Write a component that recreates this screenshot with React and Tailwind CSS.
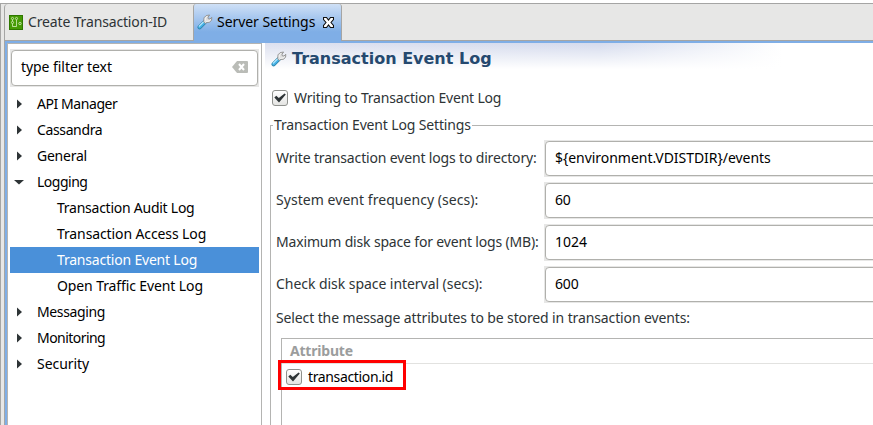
function Wrench() {
  return (
    <svg className="block h-4 w-4 shrink-0" viewBox="0 0 16 16">
      <path d="M2.6 13.2 7.800 8" stroke="#3088ae" strokeWidth="4.200" strokeLinecap="round" />
      <path d="M2.600 13 7.600 8" stroke="#48b5ea" strokeWidth="2.600" strokeLinecap="round" />
      <path d="M2.300 12.200 6.400 8" stroke="#b9e8fb" strokeWidth="1.100" strokeLinecap="round" />
      <path d="M6.800 7.300 7 3.800 9.200 1.600 12.600 1 11 3.200 11.300 4.800 13 5 14.800 3.300 14.600 6 12.700 8.200 9.700 8.500 8.500 9.600 6.500 7.700Z" fill="#dedede" stroke="#8c8c8c" strokeWidth=".9" />
      <path d="M8.200 6.800V4.200L10.200 2.300M9 7.400l3.200-.4 1.700-1.500" fill="none" stroke="#f8f8f8" strokeWidth=".9" />
    </svg>
  );
}

function PolicyIcon() {
  return (
    <svg className="block h-[15px] w-[14px] shrink-0" viewBox="0 0 14 15">
      <path d="M0 0h14v15H0z" fill="#2f7800" />
      <path d="M1 1h12v13H1z" fill="#469b05" />
      <g fill="none" stroke="#d5edbd" strokeWidth=".8">
        <circle cx="3.500" cy="3.500" r="1.100" />
        <circle cx="3.500" cy="7.500" r="1.100" />
        <circle cx="7.500" cy="3.500" r="1.100" />
        <circle cx="11" cy="8.500" r="1.200" />
        <path d="M7.500 4.600v6.900h-4V8.600M3.500 4.600v1.800" />
      </g>
    </svg>
  );
}

function CloseIcon() {
  return (
    <svg className="block h-[11px] w-[11px] shrink-0" viewBox="0 0 11 11">
      <path d="M.5.5h3l2 2.500 2-2.500h3v2L8 5.500l2.500 3v2h-3l-2-2.500-2 2.500h-3v-2L3 5.500.5 2.500Z" fill="#fff" stroke="#111" strokeWidth="1.100" />
    </svg>
  );
}

function ClearIcon() {
  return (
    <svg className="block h-3 w-4 shrink-0" viewBox="0 0 16 12">
      <path d="M0 6 5 0h10q1 0 1 1v10q0 1-1 1H5Z" fill="#babcb7" />
      <path d="m7 3 5 6m0-6L7 9" stroke="#fff" strokeWidth="2" />
    </svg>
  );
}

function CheckBox() {
  return (
    <span className="flex h-4 w-4 shrink-0 items-center justify-center rounded-[3px] border border-[#8f918d] bg-linear-to-b from-white to-[#e4e4e2]">
      <svg className="block h-[10px] w-3" viewBox="0 0 12 10">
        <path d="M.3 4.600 2.300 2.800 4.800 5 10.600.4 11.800 1.500 5 9.400Z" fill="#2e3436" />
      </svg>
    </span>
  );
}

function Arrow({ open }) {
  return (
    <svg className="block h-[10px] w-[10px] shrink-0" viewBox="0 0 10 10">
      <path d={open ? "M0 3h10L5 7.500Z" : "M3 .5v9L8 5Z"} fill="#2e3436" />
    </svg>
  );
}

function Branch({ label, open, track }) {
  return (
    <div className="flex h-[26px] items-center gap-[13px] pl-1">
      <Arrow open={open} />
      <span className={track}>{label}</span>
    </div>
  );
}

function Leaf({ label, selected, track }) {
  return (
    <div className={selected ? "flex h-[26px] items-center bg-[#4a90d9] pl-[47px] text-white" : "flex h-[26px] items-center pl-[47px]"}>
      <span className={track}>{label}</span>
    </div>
  );
}

function Field({ label, value, track, valueTrack }) {
  return (
    <div className="flex h-[42px]">
      <div className="flex h-[36px] w-[268px] shrink-0 items-center">
        <span className={track}>{label}</span>
      </div>
      <div className="h-[37px] w-[360px] shrink-0 bg-[#e7e7e6] p-px">
        <div className="flex h-[35px] items-center rounded-[4px] border border-[#b0b0ac] bg-white pb-[2px] pl-[9px] text-black">
          <span className={valueTrack}>{value}</span>
        </div>
      </div>
    </div>
  );
}

export default function App() {
  return (
    <div className="flex h-[425px] w-[873px] flex-col overflow-hidden bg-white pt-[3px] font-['Noto_Sans','Open_Sans',sans-serif] text-[14px] leading-5 whitespace-nowrap text-[#2e3436]">
      <div className="flex h-[422px] border-t border-l border-[#a5a5a4] bg-[#e7e7e6] pl-[3px]">
        <div className="flex h-[421px] w-[869px] flex-col overflow-hidden rounded-tl-[4px] border-l border-[#a5a5a4]">
          <div className="flex h-[37px] shrink-0">
            <div className="flex w-[188px] items-center gap-[5px] border-b border-[#a5a5a4] pl-1">
              <PolicyIcon />
              <span className="tracking-[-0.15px]">Create Transaction-ID</span>
            </div>
            <div className="flex w-[149px] items-center rounded-t-[3px] border-x border-[#a5a5a4] bg-linear-to-b from-[#cfe0f6] to-[#7faee6] to-75% pb-px pl-[3px] text-black">
              <Wrench />
              <span className="ml-[4px] w-[106px] tracking-[-0.05px]">Server Settings</span>
              <CloseIcon />
            </div>
            <div className="flex-1 border-b border-[#a5a5a4]" />
          </div>
          <div className="flex h-[384px] flex-col bg-[#7faee6] pt-[2px] pl-[2px]">
            <div className="flex h-[382px] bg-white">
              <div className="w-[255px] shrink-0 border border-b-0 border-[#b4b4b2] pt-[5px] pl-[2px] text-black">
                <div className="h-[38px] w-[249px] bg-[#e7e7e6] p-px">
                  <div className="flex h-[36px] items-center justify-between rounded-[4px] border border-[#b0b0ac] bg-white pr-[9px] pb-[2px] pl-[9px]">
                    <span className="tracking-[-0.06px]">type filter text</span>
                    <ClearIcon />
                  </div>
                </div>
                <div className="mt-[4px] w-[249px]">
                  <Branch label="API Manager" track="tracking-[-0.43px]" />
                  <Branch label="Cassandra" track="tracking-[-0.37px]" />
                  <Branch label="General" track="tracking-[-0.25px]" />
                  <Branch label="Logging" open track="tracking-[-0.5px]" />
                  <Leaf label="Transaction Audit Log" track="tracking-[-0.25px]" />
                  <Leaf label="Transaction Access Log" track="tracking-[-0.11px]" />
                  <Leaf label="Transaction Event Log" selected track="tracking-[-0.2px]" />
                  <Leaf label="Open Traffic Event Log" track="tracking-[-0.11px]" />
                  <Branch label="Messaging" track="tracking-[-0.36px]" />
                  <Branch label="Monitoring" track="tracking-[-0.55px]" />
                  <Branch label="Security" track="tracking-[-0.05px]" />
                </div>
              </div>
              <div className="ml-[3px] w-[608px] shrink-0 overflow-hidden">
                <div className="h-[40px] bg-linear-to-r from-[#dce0ef] from-0% via-[#d5dbed] via-55% to-white to-85%">
                  <div className="flex h-full items-start bg-linear-to-b from-white/0 to-white to-[26px] pt-[6px] pl-[6px]">
                    <span className="mt-[2px]"><Wrench /></span>
                    <h1 className="ml-[5px] font-['DejaVu_Sans',sans-serif] text-[16px] leading-5 font-bold text-[#25496f]">Transaction Event Log</h1>
                  </div>
                </div>
                <div className="flex h-[30px] items-center gap-[6px] pl-[7px]">
                  <CheckBox />
                  <span className="tracking-[-0.19px]">Writing to Transaction Event Log</span>
                </div>
                <fieldset className="ml-[5px] h-[320px] w-[640px] min-w-0">
                  <div className="flex h-[24px] items-center">
                    <span className="mt-[12px] h-[12px] w-[3px] self-start border-t border-l border-[#b4b4b2]" />
                    <span className="ml-px tracking-[-0.15px]">Transaction Event Log Settings</span>
                    <span className="ml-px h-px flex-1 bg-[#b4b4b2]" />
                  </div>
                  <div className="h-[296px] border-l border-[#b4b4b2] pt-[3px] pl-[5px]">
                    <Field label="Write transaction event logs to directory:" value="${environment.VDISTDIR}/events" track="tracking-[-0.16px]" valueTrack="tracking-[-0.04px]" />
                    <Field label="System event frequency (secs):" value="60" track="tracking-[0.05px]" valueTrack="tracking-[-0.15px]" />
                    <Field label="Maximum disk space for event logs (MB):" value="1024" track="tracking-[-0.17px]" valueTrack="tracking-[0px]" />
                    <Field label="Check disk space interval (secs):" value="600" track="tracking-[-0.05px]" valueTrack="tracking-[-0.15px]" />
                    <div className="flex h-[30px] items-start">
                      <span className="tracking-[-0.12px]">Select the message attributes to be stored in transaction events:</span>
                    </div>
                    <div className="ml-[5px] h-[100px] border-t border-l border-[#b4b4b2] text-black">
                      <div className="flex h-[25px] items-center border-b border-[#e2e2e0] pl-2 font-bold text-[#9b9d9d]">
                        <span className="tracking-[-0.2px]">Attribute</span>
                      </div>
                      <div className="relative -mt-[4px] -ml-[4px] flex h-[30px] w-[128px] items-center gap-[6px] border-3 border-[#f00] pt-[4px] pl-[5px]">
                        <CheckBox />
                        <span className="tracking-[-0.36px]">transaction.id</span>
                      </div>
                    </div>
                  </div>
                </fieldset>
              </div>
            </div>
          </div>
        </div>
      </div>
    </div>
  );
}
